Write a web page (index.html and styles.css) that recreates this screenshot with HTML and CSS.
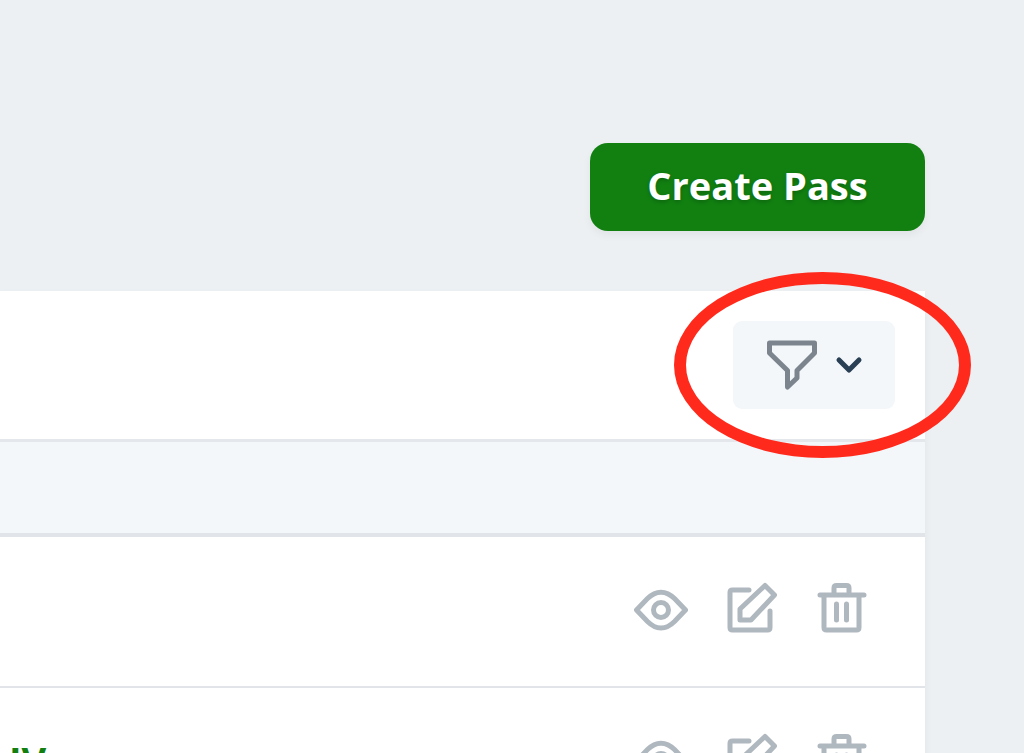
FILE: index.html
```html
<!DOCTYPE html>
<html lang="en">
<head>
<meta charset="utf-8">
<title>Passes</title>
<link rel="stylesheet" href="styles.css">
</head>
<body>
<svg class="sprite" aria-hidden="true">
  <symbol id="eye" viewBox="0 0 56 56"><path d="M4.500 30 15.500 18.500C24 10 34 10 42.500 18.500L53.500 30 42.500 41.500C34 50 24 50 15.500 41.500Z"/><circle cx="29" cy="30" r="7.500"/></symbol>
  <symbol id="edit" viewBox="0 0 56 56"><path d="M26 10H9.500Q7 10 7 12.500V47.500Q7 50 9.500 50H44.500Q47 50 47 47.500V31M42 5.500 51.500 15 28 40H17V29Z"/></symbol>
  <symbol id="trash" viewBox="0 0 56 56"><path d="M6 15H50M20 15V8Q20 5.500 22.500 5.500H32.500Q35 5.500 35 8V15M10 15V47.500Q10 50 12.500 50H42.500Q45 50 45 47.500V15M22.500 24V40M32.500 24V40"/></symbol>
</svg>
<main class="page">
  <header class="heading">
    <button class="create" type="button">Create Pass</button>
  </header>
  <section class="card">
    <div class="toolbar">
      <div class="filter-wrap">
        <button class="filter" type="button" aria-label="Filter">
          <svg class="funnel" viewBox="0 0 52 52"><path d="M3.500 4H48.500V14L31 31.500V39L21.500 48V31.500L3.500 14Z"/></svg>
          <svg class="chevron" viewBox="0 0 28 18"><path d="M4 4 14 14 24 4"/></svg>
        </button>
        <span class="highlight"></span>
      </div>
    </div>
    <table class="passes">
      <thead><tr><th></th><th></th></tr></thead>
      <tbody>
        <tr>
          <td></td>
          <td><div class="actions">
            <button class="action" type="button" aria-label="View"><svg class="icon"><use href="#eye"/></svg></button>
            <button class="action" type="button" aria-label="Edit"><svg class="icon"><use href="#edit"/></svg></button>
            <button class="action" type="button" aria-label="Delete"><svg class="icon"><use href="#trash"/></svg></button>
          </div></td>
        </tr>
        <tr>
          <td><a class="pass-link" href="#">IV</a></td>
          <td><div class="actions">
            <button class="action" type="button" aria-label="View"><svg class="icon"><use href="#eye"/></svg></button>
            <button class="action" type="button" aria-label="Edit"><svg class="icon"><use href="#edit"/></svg></button>
            <button class="action" type="button" aria-label="Delete"><svg class="icon"><use href="#trash"/></svg></button>
          </div></td>
        </tr>
      </tbody>
    </table>
  </section>
</main>
</body>
</html>
```
FILE: styles.css
```css
* { box-sizing: border-box; }
body {
  margin: 0;
  height: 100vh;
  overflow: hidden;
  background: #ecf0f3;
  font-family: "Open Sans", sans-serif;
}
button { border: 0; padding: 0; background: none; font: inherit; cursor: pointer; }
svg { fill: none; stroke: currentColor; stroke-width: 5px; stroke-linecap: round; stroke-linejoin: round; }
.sprite { display: none; }
.page { padding: 143px 99px 0 0; }
.heading { display: flex; justify-content: flex-end; margin-bottom: 60px; }
.create {
  min-width: 335px;
  padding: 18px 48px 22px;
  border-radius: 18px;
  background: #118011;
  color: #fff;
  font-size: 38px;
  line-height: 48px;
  font-weight: 700;
  text-shadow: 0 2px 4px rgba(0, 0, 0, .2);
  box-shadow: 0 4px 8px rgba(0, 0, 0, .05);
}
.card { background: #fff; box-shadow: 0 4px 8px rgba(0, 0, 0, .05); }
.toolbar { display: flex; justify-content: flex-end; padding: 30px; }
.filter-wrap { position: relative; }
.filter {
  display: flex;
  align-items: center;
  gap: 17px;
  padding: 18px 32px 18px 33px;
  border-radius: 9px;
  background: #f3f7fa;
}
.funnel { width: 52px; height: 52px; color: #7c858e; }
.chevron { width: 28px; height: 18px; color: #293f54; }
.highlight {
  position: absolute;
  inset: -49px -76px -49px -59px;
  border: 12px solid #ff2a1c;
  border-radius: 50%;
  pointer-events: none;
}
.passes { width: 100%; border-collapse: separate; border-spacing: 0; }
.passes th {
  height: 98px;
  border-top: 3px solid #e4e8ec;
  border-bottom: 4px solid #e1e5e9;
  background: #f3f7fa;
}
.passes td { padding: 43px 55px 50px 0; border-bottom: 2px solid #e1e5ea; }
.passes td:first-child { padding: 36px 0 42px 9px; }
.actions { display: flex; justify-content: flex-end; gap: 35px; }
.action { display: block; color: #b0b8bf; }
.icon { display: block; width: 56px; height: 56px; }
.pass-link { color: #118011; font-size: 38px; line-height: 48px; font-weight: 700; text-decoration: none; }
```
